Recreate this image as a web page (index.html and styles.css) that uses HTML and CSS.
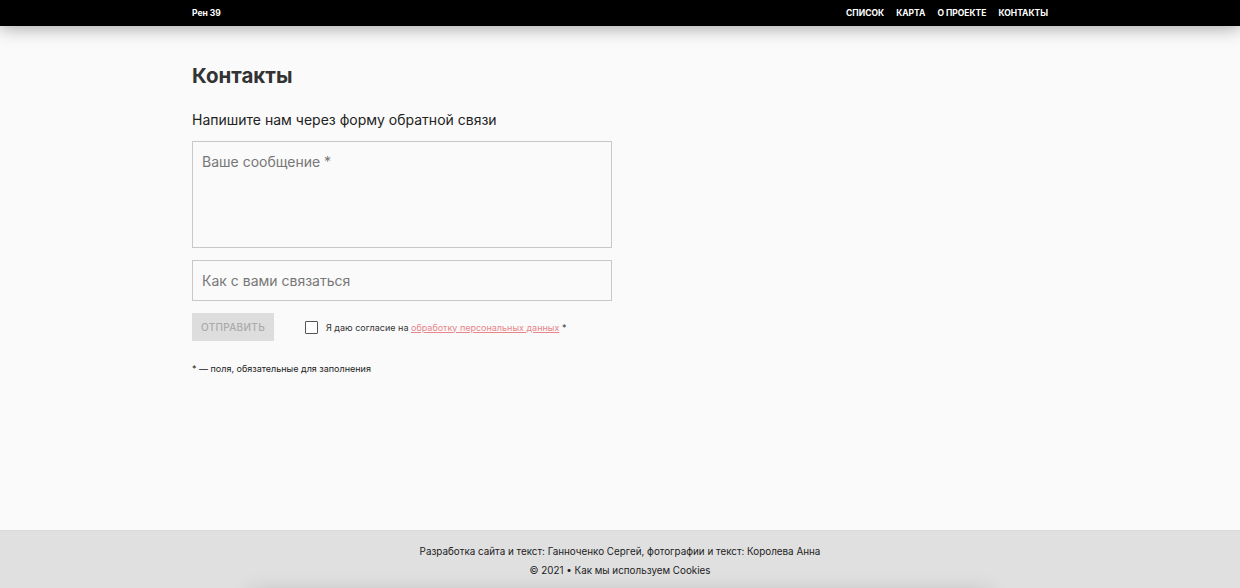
FILE: index.html
```html
<!DOCTYPE html>
<html lang="ru">
<head>
<meta charset="utf-8">
<title>Контакты — Рен 39</title>
<link rel="stylesheet" href="styles.css">
</head>
<body>
<header class="topbar">
  <div class="wrap topbar-inner">
    <a class="logo" href="#">Рен 39</a>
    <nav class="nav">
      <a href="#">Список</a>
      <a href="#">Карта</a>
      <a href="#">О проекте</a>
      <a href="#">Контакты</a>
    </nav>
  </div>
</header>
<main class="wrap main">
  <h1 class="title">Контакты</h1>
  <p class="lead">Напишите нам через форму обратной связи</p>
  <form class="form">
    <textarea class="field area" placeholder="Ваше сообщение *"></textarea>
    <input class="field line" type="text" placeholder="Как с вами связаться">
    <div class="actions">
      <button class="send" type="button" disabled>Отправить</button>
      <label class="agree">
        <span class="box"></span>
        <span>Я даю согласие на <a href="#" class="link">обработку персональных данных</a> *</span>
      </label>
    </div>
    <p class="note">* — поля, обязательные для заполнения</p>
  </form>
</main>
<footer class="footer">
  <p>Разработка сайта и текст: Ганноченко Сергей, фотографии и текст: Королева Анна</p>
  <p>© 2021 • Как мы используем Cookies</p>
  <div class="cookie-shadow"></div>
</footer>
</body>
</html>
```
FILE: styles.css
```css
* { box-sizing: border-box; }
html, body { margin: 0; padding: 0; }
body {
  background: #fafafa;
  font-family: Inter, "Noto Sans", "Liberation Sans", sans-serif;
  color: #333;
  height: 588px;
  display: flex;
  flex-direction: column;
  overflow: hidden;
}
.wrap { width: 856px; margin: 0 auto; }
.topbar {
  background: #000;
  height: 26px;
  box-shadow: 0 2px 18px rgba(0,0,0,0.35);
  position: relative;
  z-index: 2;
}
.topbar-inner {
  height: 26px;
  display: flex;
  align-items: center;
  justify-content: space-between;
}
.logo, .nav a {
  color: #fff;
  text-decoration: none;
  font-weight: 700;
  font-size: 8.5px;
}
.nav { display: flex; gap: 12px; }
.nav a { text-transform: uppercase; }
.main { flex: 1; padding-top: 36px; }
.title {
  margin: 0;
  font-size: 20.5px;
  font-weight: 700;
  line-height: 28px;
  color: #333;
}
.lead {
  margin: 20px 0 0;
  font-size: 14px;
  line-height: 20px;
  color: #222;
}
.form { width: 420px; margin-top: 11px; display: flex; flex-direction: column; }
.field {
  display: block;
  width: 420px;
  border: 1px solid #c8c8c8;
  background: #fafafa;
  font-family: inherit;
  font-size: 14px;
  color: #333;
  padding: 0 9px;
  outline: none;
}
.field::placeholder { color: #777; }
.area { height: 107px; padding-top: 11px; resize: none; }
.line { height: 41px; margin-top: 12px; }
.actions { display: flex; align-items: center; margin-top: 12px; }
.send {
  width: 82px;
  height: 28px;
  border: 0;
  background: #ddd;
  color: #aaa;
  font-family: inherit;
  font-size: 10px;
  font-weight: 500;
  text-transform: uppercase;
  letter-spacing: 0.3px;
  padding: 0;
}
.agree {
  display: flex;
  align-items: center;
  gap: 8px;
  margin-left: 31px;
  font-size: 9px;
  color: #333;
}
.box {
  width: 13px;
  height: 13px;
  border: 1px solid #555;
  border-radius: 1px;
  background: #fff;
}
.link { color: #e8858a; text-decoration: underline; }
.note { margin: 22px 0 0; font-size: 9px; color: #222; }
.footer {
  background: #e0e0e0;
  height: 58px;
  border-top: 1px solid #dadada;
  text-align: center;
  font-size: 9.85px;
  color: #222;
  padding-top: 11px;
  position: relative;
  overflow: hidden;
}
.footer p { margin: 0; line-height: 19px; }
.cookie-shadow {
  position: absolute;
  left: 250px;
  right: 250px;
  top: 62px;
  height: 30px;
  background: #e0e0e0;
  box-shadow: 0 0 22px rgba(0,0,0,0.18);
}
```
